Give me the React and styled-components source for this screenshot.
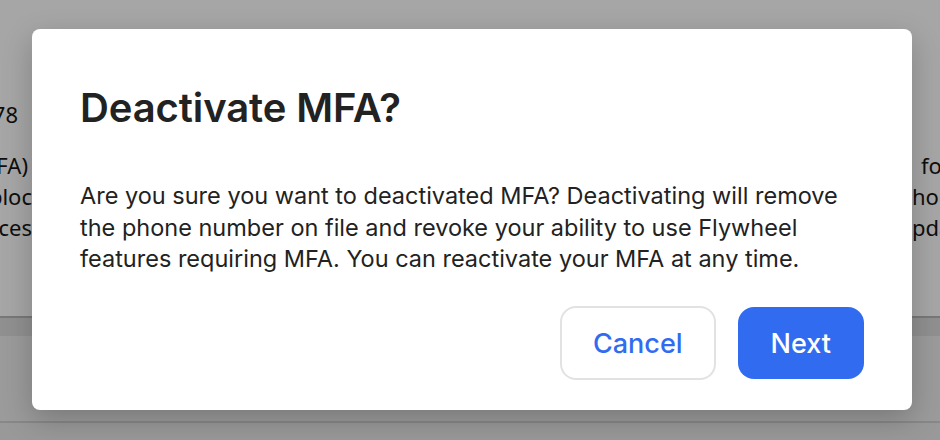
import React from "react";
import styled, { createGlobalStyle } from "styled-components";

const GlobalStyle = createGlobalStyle`
  html, body { margin: 0; padding: 0; background: #ffffff; }
  body { font-family: Inter, "Noto Sans", "Liberation Sans", sans-serif; }
  * { box-sizing: border-box; }
`;

const Page = styled.div`
  position: relative;
  width: 940px;
  height: 440px;
  overflow: hidden;
  background: #ffffff;
  display: flex;
  flex-direction: column;
`;

const BgTop = styled.div`
  height: 316px;
  display: flex;
  justify-content: space-between;
  background: #ffffff;
  font-family: "Noto Sans", "Open Sans", sans-serif;
  font-size: 22px;
  line-height: 31px;
  color: #161616;
`;

const BgColumn = styled.div`
  width: ${(p) => p.$width}px;
  overflow: hidden;
  padding-top: 99px;
  display: flex;
  flex-direction: column;
  align-items: ${(p) => (p.$side === "left" ? "flex-end" : "flex-start")};
`;

const BgLine = styled.div`
  white-space: nowrap;
  margin-top: ${(p) => p.$gap || 0}px;
  padding-right: ${(p) => p.$right || 0}px;
  padding-left: ${(p) => p.$left || 0}px;
`;

const BgDivider = styled.div`
  height: ${(p) => p.$h}px;
  background: ${(p) => p.$color};
`;

const Overlay = styled.div`
  position: absolute;
  inset: 0;
  background: rgba(0, 0, 0, 0.35);
  display: flex;
  align-items: flex-start;
  justify-content: flex-start;
  padding: 29px 28px 0 32px;
`;

const Modal = styled.div`
  width: 880px;
  height: 381px;
  background: #ffffff;
  border-radius: 8px;
  box-shadow: 0 10px 30px rgba(0, 0, 0, 0.22);
  padding: 55px 48px 30px 48px;
  display: flex;
  flex-direction: column;
`;

const Title = styled.h2`
  margin: 0;
  font-family: Inter, "Liberation Sans", sans-serif;
  font-size: 40px;
  line-height: 48px;
  font-weight: 600;
  color: #222222;
  letter-spacing: -0.1px;
`;

const Body = styled.p`
  margin: 48px 0 0 0;
  font-family: Inter, "Liberation Sans", sans-serif;
  font-size: 23.5px;
  line-height: 31.5px;
  font-weight: 400;
  color: #222222;
`;

const Footer = styled.div`
  margin-top: auto;
  display: flex;
  justify-content: flex-end;
  align-items: center;
  gap: 22px;
`;

const Button = styled.button`
  font-family: Inter, "Liberation Sans", sans-serif;
  font-size: 27px;
  font-weight: 500;
  border-radius: 16px;
  cursor: pointer;
  display: inline-flex;
  align-items: center;
  justify-content: center;
  height: ${(p) => (p.$variant === "primary" ? 72 : 74)}px;
  padding: 0 ${(p) => (p.$variant === "primary" ? 33 : 31)}px;
  background: ${(p) => (p.$variant === "primary" ? "#316cf0" : "#ffffff")};
  color: ${(p) => (p.$variant === "primary" ? "#ffffff" : "#316cf0")};
  border: ${(p) => (p.$variant === "primary" ? "none" : "2px solid #e2e2e2")};
`;

export default function App() {
  return (
    <>
      <GlobalStyle />
      <Page>
        <BgTop>
          <BgColumn $side="left" $width={32}>
            <BgLine $right={14}>(555) 123-5678</BgLine>
            <BgLine $gap={20} $right={4}>authentication (MFA)</BgLine>
            <BgLine>account is unbloc</BgLine>
            <BgLine>full acces</BgLine>
          </BgColumn>
          <BgColumn $side="right" $width={28}>
            <BgLine $gap={51} $left={9}>for</BgLine>
            <BgLine>hods</BgLine>
            <BgLine>pdate</BgLine>
          </BgColumn>
        </BgTop>
        <BgDivider $h={2} $color="#b8b8b8" />
        <BgDivider $h={18} $color="#dedede" />
        <BgDivider $h={85} $color="#eeeeee" />
        <BgDivider $h={2} $color="#d2d2d2" />
        <BgDivider $h={17} $color="#ececec" />
        <Overlay>
          <Modal role="dialog" aria-modal="true">
            <Title>Deactivate MFA?</Title>
            <Body>
              Are you sure you want to deactivated MFA? Deactivating will remove the
              phone number on file and revoke your ability to use Flywheel features
              requiring MFA. You can reactivate your MFA at any time.
            </Body>
            <Footer>
              <Button $variant="secondary">Cancel</Button>
              <Button $variant="primary">Next</Button>
            </Footer>
          </Modal>
        </Overlay>
      </Page>
    </>
  );
}
